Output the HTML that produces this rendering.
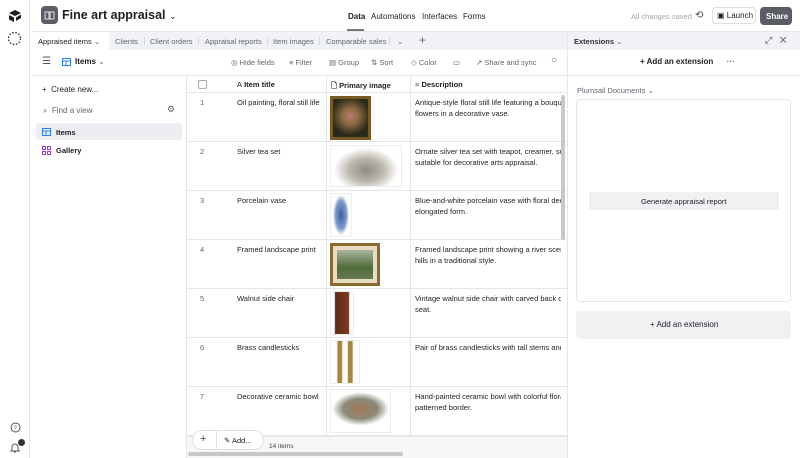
<!DOCTYPE html>
<html><head><meta charset="utf-8"><style>
*{box-sizing:border-box;margin:0;padding:0}
body{width:800px;height:458px;overflow:hidden;font-family:"Liberation Sans",sans-serif;font-size:7.5px;color:#1d1f25;background:#fff;position:relative}
.a{position:absolute}
.t{position:absolute;white-space:nowrap}
.g{color:#616670}
.hl{position:absolute;background:#e4e6ea}
.tb{position:absolute;top:37px;font-size:7.5px;color:#616670;white-space:nowrap}
.sp{position:absolute;top:37px;width:1px;height:8px;background:#d5d8dd}
.tl{position:absolute;top:58px;font-size:7.5px;color:#616670;white-space:nowrap}
.r{font-size:7.5px;line-height:11px}
</style></head><body>
<div class="a" style="left:0;top:0;width:30px;height:458px;border-right:1px solid #e4e6ea;background:#fff"></div>
<svg class="a" style="left:8px;top:10px" width="14" height="12" viewBox="0 0 14 12"><path d="M1 3 L7 0 L13 3 L7 6Z M1 5 L6 7.5 V12 L1 9.5Z M13 4.5 V8 L8 11 V7.5Z" fill="#1d1f25"/></svg>
<svg class="a" style="left:7px;top:31px" width="15" height="15" viewBox="0 0 15 15" fill="none" stroke="#333" stroke-width="1.3" stroke-dasharray="1.6 1.6"><circle cx="7.5" cy="7.5" r="6"/></svg>
<svg class="a" style="left:10px;top:422px" width="11" height="11"><circle cx="5.5" cy="5.5" r="4.5" fill="none" stroke="#555"/><text x="3.5" y="8" font-size="6" fill="#555">?</text></svg>
<svg class="a" style="left:10px;top:442px" width="10" height="11"><path d="M2 8 V5 a3 3 0 0 1 6 0 V8 L9 9 H1Z M4 10 h2" fill="none" stroke="#555"/></svg>
<div class="a" style="left:18px;top:439px;width:7px;height:7px;border-radius:50%;background:#333"></div>
<div class="a" style="left:41px;top:6px;width:17px;height:18px;border-radius:4px;background:#5a5d63"></div>
<svg class="a" style="left:44px;top:10px" width="11" height="10"><path d="M1 2 h4 v7 h-4z M6 2 h4 v7 h-4z" fill="none" stroke="#ddd"/></svg>
<div class="t" style="left:62px;top:8px;font-size:12.5px;font-weight:bold">Fine art appraisal <span style="font-weight:normal;font-size:9px">⌄</span></div>
<div class="t" style="left:348px;top:12px;font-size:8px;font-weight:bold">Data</div>
<div class="a" style="left:347px;top:29px;width:17px;height:2px;background:#777"></div>
<div class="t" style="left:371px;top:12px;font-size:8px">Automations</div>
<div class="t" style="left:422px;top:12px;font-size:8px">Interfaces</div>
<div class="t" style="left:463px;top:12px;font-size:8px">Forms</div>
<div class="t" style="left:631px;top:12px;font-size:7.5px;color:#a0a4ab">All changes saved</div>
<div class="t" style="left:695px;top:10px;font-size:10px;color:#444">⟲</div>
<div class="a" style="left:712px;top:7px;width:44px;height:17px;border:1px solid #dcdfe4;border-radius:4px"></div>
<div class="t" style="left:717px;top:11px;font-size:8px">▣ Launch</div>
<div class="a" style="left:760px;top:7px;width:32px;height:18px;border-radius:4px;background:#5a5d63"></div>
<div class="t" style="left:766px;top:12px;font-size:8px;color:#fff;font-weight:bold">Share</div>
<!-- tab bar -->
<div class="a" style="left:31px;top:31px;width:769px;height:19px;background:#f0f2f5;border-top:1px solid #e4e6ea"></div>
<div class="a" style="left:31px;top:32px;width:78px;height:18px;background:#fff"></div>
<div class="t" style="left:38px;top:37px;font-size:7.5px">Appraised items <span class="g">⌄</span></div>
<div class="tb" style="left:115px">Clients</div><div class="sp" style="left:144px"></div>
<div class="tb" style="left:150px">Client orders</div><div class="sp" style="left:198px"></div>
<div class="tb" style="left:205px">Appraisal reports</div><div class="sp" style="left:267px"></div>
<div class="tb" style="left:273px">Item images</div><div class="sp" style="left:319px"></div>
<div class="tb" style="left:326px">Comparable sales</div><div class="sp" style="left:389px"></div>
<div class="tb" style="left:397px">⌄</div>
<div class="tb" style="left:419px;top:33px;font-size:12px">+</div>
<div class="a" style="left:567px;top:32px;width:233px;height:18px;background:#f0f2f5;border-left:1px solid #e4e6ea"></div>
<div class="t" style="left:574px;top:37px;font-size:7.5px;font-weight:bold;color:#333">Extensions <span class="g" style="font-weight:normal">⌄</span></div>
<div class="t" style="left:765px;top:35px;font-size:9px;color:#444">⤢ &nbsp;&nbsp;✕</div>
<!-- toolbar -->
<div class="hl" style="left:31px;top:75px;width:536px;height:1px"></div>
<div class="t" style="left:42px;top:56px;font-size:10px;color:#555">☰</div>
<svg class="a" style="left:62px;top:58px" width="9" height="8"><rect x=".5" y=".5" width="8" height="7" fill="none" stroke="#2d7ff9"/><path d="M.5 3h8M4 3v5" stroke="#2d7ff9"/></svg>
<div class="t" style="left:75px;top:57px;font-size:8px;font-weight:bold">Items <span class="g" style="font-weight:normal">⌄</span></div>
<div class="tl" style="left:231px">◎ Hide fields</div>
<div class="tl" style="left:289px">≡ Filter</div>
<div class="tl" style="left:329px">▤ Group</div>
<div class="tl" style="left:371px">⇅ Sort</div>
<div class="tl" style="left:411px">◇ Color</div>
<div class="tl" style="left:453px">▭</div>
<div class="tl" style="left:476px">↗ Share and sync</div>
<div class="tl" style="left:551px;font-size:10px;top:55px">○</div>
<div class="hl" style="left:567px;top:75px;width:233px;height:1px"></div>
<div class="a" style="left:567px;top:50px;width:1px;height:408px;background:#e4e6ea"></div>
<div class="t" style="left:640px;top:57px;font-size:8px;font-weight:bold">+ Add an extension &nbsp;&nbsp;&nbsp;&nbsp; <span class="g">···</span></div>
<div class="t g" style="left:577px;top:86px;font-size:7.5px">Plumsail Documents ⌄</div>
<div class="a" style="left:576px;top:99px;width:215px;height:203px;border:1px solid #e4e6ea;border-radius:4px"></div>
<div class="a" style="left:589px;top:192px;width:190px;height:18px;background:#f0f1f3"></div>
<div class="t" style="left:641px;top:197px;font-size:7.5px">Generate appraisal report</div>
<div class="a" style="left:576px;top:311px;width:215px;height:28px;background:#f0f1f3;border-radius:4px"></div>
<div class="t" style="left:650px;top:320px;font-size:8px">+ Add an extension</div>
<!-- sidebar -->
<div class="a" style="left:186px;top:76px;width:1px;height:382px;background:#e4e6ea"></div>
<div class="t" style="left:42px;top:85px;font-size:8px">+ &nbsp;Create new...</div>
<div class="t g" style="left:43px;top:106px;font-size:8px">⌕ &nbsp;Find a view</div>
<div class="t g" style="left:167px;top:104px;font-size:9px">⚙</div>
<div class="a" style="left:36px;top:123px;width:146px;height:17px;background:#eceef1;border-radius:3px"></div>
<svg class="a" style="left:42px;top:128px" width="9" height="8"><rect x=".5" y=".5" width="8" height="7" fill="none" stroke="#2d7ff9"/><path d="M.5 3h8M4 3v5" stroke="#2d7ff9"/></svg>
<div class="t" style="left:56px;top:128px;font-size:7.5px;font-weight:bold">Items</div>
<svg class="a" style="left:42px;top:146px" width="9" height="9"><g fill="none" stroke="#9b3dd1"><rect x=".5" y=".5" width="3" height="3"/><rect x="5.5" y=".5" width="3" height="3"/><rect x=".5" y="5.5" width="3" height="3"/><rect x="5.5" y="5.5" width="3" height="3"/></g></svg>
<div class="t" style="left:56px;top:146px;font-size:7.5px;font-weight:bold">Gallery</div>
<!-- grid -->
<div class="hl" style="left:187px;top:92px;width:380px;height:1px"></div>
<div class="a" style="left:198px;top:80px;width:9px;height:9px;border:1px solid #aaa;border-radius:2px"></div>
<div class="t" style="left:237px;top:80px;font-size:7.5px;font-weight:bold"><span style="font-weight:normal">A</span> Item title</div>
<div class="t" style="left:331px;top:80px;font-size:7.5px;font-weight:bold">🗋 Primary image</div>
<div class="t" style="left:415px;top:80px;font-size:7.5px;font-weight:bold"><span class="g">≡</span> Description</div>
<div class="hl" style="left:326px;top:76px;width:1px;height:382px"></div>
<div class="hl" style="left:410px;top:76px;width:1px;height:382px"></div>
<div class="hl" style="left:187px;top:141px;width:380px;height:1px"></div>
<div class="hl" style="left:187px;top:190px;width:380px;height:1px"></div>
<div class="hl" style="left:187px;top:239px;width:380px;height:1px"></div>
<div class="hl" style="left:187px;top:288px;width:380px;height:1px"></div>
<div class="hl" style="left:187px;top:337px;width:380px;height:1px"></div>
<div class="hl" style="left:187px;top:386px;width:380px;height:1px"></div>
<div class="hl" style="left:187px;top:435px;width:380px;height:1px"></div>

<div class="r">
<div class="t g" style="left:200px;top:97px">1</div><div class="t" style="left:237px;top:97px">Oil painting, floral still life</div><div class="t" style="left:415px;top:97px;width:146px;overflow:hidden">Antique-style floral still life featuring a bouquet<br>flowers in a decorative vase.</div>
<div class="t g" style="left:200px;top:146px">2</div><div class="t" style="left:237px;top:146px">Silver tea set</div><div class="t" style="left:415px;top:146px;width:146px;overflow:hidden">Ornate silver tea set with teapot, creamer, sugar<br>suitable for decorative arts appraisal.</div>
<div class="t g" style="left:200px;top:195px">3</div><div class="t" style="left:237px;top:195px">Porcelain vase</div><div class="t" style="left:415px;top:195px;width:146px;overflow:hidden">Blue-and-white porcelain vase with floral decora<br>elongated form.</div>
<div class="t g" style="left:200px;top:244px">4</div><div class="t" style="left:237px;top:244px">Framed landscape print</div><div class="t" style="left:415px;top:244px;width:146px;overflow:hidden">Framed landscape print showing a river scene w<br>hills in a traditional style.</div>
<div class="t g" style="left:200px;top:293px">5</div><div class="t" style="left:237px;top:293px">Walnut side chair</div><div class="t" style="left:415px;top:293px;width:146px;overflow:hidden">Vintage walnut side chair with carved back detai<br>seat.</div>
<div class="t g" style="left:200px;top:342px">6</div><div class="t" style="left:237px;top:342px">Brass candlesticks</div><div class="t" style="left:415px;top:342px;width:146px;overflow:hidden">Pair of brass candlesticks with tall stems and rou</div>
<div class="t g" style="left:200px;top:391px">7</div><div class="t" style="left:237px;top:391px">Decorative ceramic bowl</div><div class="t" style="left:415px;top:391px;width:146px;overflow:hidden">Hand-painted ceramic bowl with colorful floral c<br>patterned border.</div>
</div>
<!-- images -->
<div class="a" style="left:330px;top:96px;width:41px;height:44px;background:#7a5a22;padding:3px"><div style="width:100%;height:100%;background:radial-gradient(circle at 50% 45%,#c07a70 0,#8a6a40 30%,#2a2a1c 70%)"></div></div>
<div class="a" style="left:330px;top:145px;width:72px;height:42px;border:1px solid #eee;background:radial-gradient(ellipse at 50% 60%,#8f8a80 0,#bdb8ae 35%,#fff 65%)"></div>
<div class="a" style="left:330px;top:193px;width:22px;height:44px;border:1px solid #eee;background:radial-gradient(ellipse 40% 48% at 50% 50%,#3a5fa0 0,#7f9ccc 70%,#fff 100%)"></div>
<div class="a" style="left:330px;top:243px;width:50px;height:43px;background:#8a6a2e;padding:3px"><div style="width:100%;height:100%;background:#e8dcc0;padding:4px"><div style="width:100%;height:100%;background:linear-gradient(#a9b6a0,#4f6b3a 60%,#6a7a50)"></div></div></div>
<div class="a" style="left:330px;top:291px;width:24px;height:44px;border:1px solid #eee;background:linear-gradient(90deg,#fff 15%,#5e2c18 20%,#7a3a20 80%,#fff 85%)"></div>
<div class="a" style="left:330px;top:340px;width:30px;height:44px;border:1px solid #eee;background:linear-gradient(90deg,#fff 20%,#a8863f 25%,#a8863f 38%,#fff 42%,#fff 58%,#a8863f 62%,#a8863f 75%,#fff 80%)"></div>
<div class="a" style="left:330px;top:389px;width:61px;height:44px;border:1px solid #eee;background:radial-gradient(ellipse 48% 40% at 50% 45%,#a6775a 0,#8a8a7a 60%,#fff 100%)"></div>
<div class="a" style="left:330px;top:437px;width:61px;height:4px;background:#f2d4da"></div>
<div class="a" style="left:561px;top:95px;width:4px;height:145px;background:#c8c8c8;border-radius:2px"></div>
<!-- bottom bar -->
<div class="a" style="left:187px;top:436px;width:380px;height:22px;background:#f6f7f9;border-top:1px solid #e4e6ea"></div>
<div class="a" style="left:192px;top:430px;width:72px;height:20px;background:#fff;border:1px solid #dcdfe4;border-radius:10px"></div>
<div class="a" style="left:216px;top:430px;width:1px;height:20px;background:#dcdfe4"></div>
<div class="t" style="left:200px;top:433px;font-size:11px;color:#444">+</div>
<div class="t" style="left:224px;top:436px;font-size:7.5px">✎ Add...</div>
<div class="t" style="left:269px;top:443px;font-size:6.5px;color:#444">14 items</div>
<div class="a" style="left:188px;top:452px;width:215px;height:4px;background:#c8c8c8;border-radius:2px"></div>
</body></html>
